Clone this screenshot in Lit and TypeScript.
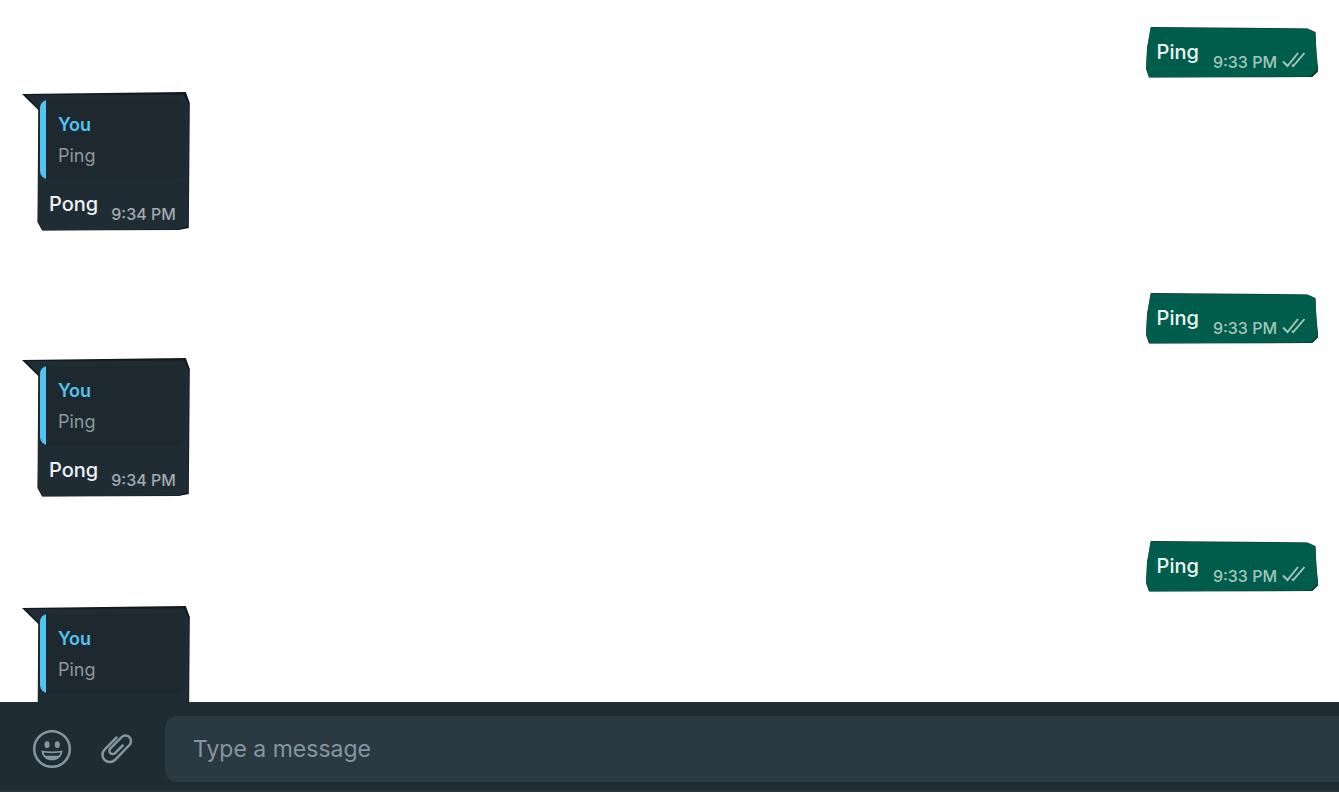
import { LitElement, html, css, svg } from "lit";
import { customElement, property, state } from "lit/decorators.js";

const doubleCheck = svg`
  <path d="M1 10.5L5.5 15L16 2" />
  <path d="M10 13.8L11.2 15L22.5 2" />`;

@customElement("sent-message")
class SentMessage extends LitElement {
  @property() text = "";
  @property() time = "";

  static styles = css`
    :host {
      display: block;
      position: relative;
      align-self: flex-end;
    }
    .shape {
      position: absolute;
      inset: 0;
      width: 100%;
      height: 100%;
    }
    .body {
      position: relative;
      display: flex;
      align-items: flex-start;
      height: 51px;
      padding: 0 12px 0 11px;
      box-sizing: border-box;
    }
    .text {
      margin: 0 14px 0 0;
      font-size: 20px;
      font-weight: 500;
      line-height: 50px;
      color: #eef7f4;
    }
    .time {
      font-size: 16px;
      font-weight: 500;
      line-height: 70px;
      color: #a3c7bc;
    }
    .check {
      width: 24px;
      height: 17px;
      margin: 24px 0 0 5px;
      fill: none;
      stroke: #a3c7bc;
      stroke-width: 1.9;
    }
  `;

  render() {
    return html`
      <svg class="shape" viewBox="0 0 172 51" preserveAspectRatio="none" aria-hidden="true">
        <path fill="#10332b" d="M5 0L161 1.4L169 5L170 25L172 44L166 50L3 50.6L0 42L1 21Z" />
        <path fill="#005c4b" d="M4.5 .7L161 1.8L169 5.6L170 25L171 43L164 49.6L3.2 50.3L.2 42L1.2 21Z" />
      </svg>
      <div class="body">
        <p class="text">${this.text}</p>
        <time class="time">${this.time}</time>
        <svg class="check" viewBox="0 0 24 17" role="img" aria-label="Delivered">${doubleCheck}</svg>
      </div>
    `;
  }
}

@customElement("reply-message")
class ReplyMessage extends LitElement {
  @property() author = "";
  @property() quote = "";
  @property() text = "";
  @property() time = "";

  static styles = css`
    :host {
      display: block;
      position: relative;
      align-self: flex-start;
    }
    .shape {
      position: absolute;
      inset: 0;
      width: 100%;
      height: 100%;
    }
    .body {
      position: relative;
      padding: 8px 5px 0 18px;
    }
    .quote {
      position: relative;
      height: 79px;
      margin: 0;
      padding: 9px 0 0 18px;
      box-sizing: border-box;
      border-radius: 8px;
      background: #1d282f;
      overflow: hidden;
    }
    .bar {
      position: absolute;
      left: 0;
      top: 0;
      width: 6px;
      height: 100%;
      background: #53c3f3;
    }
    .author,
    .quoted {
      display: block;
      font-size: 18px;
      line-height: 31px;
    }
    .author {
      font-weight: 600;
      color: #53c3f3;
    }
    .quoted {
      color: #8d979c;
    }
    .line {
      display: flex;
      height: 52px;
      padding: 0 8px 0 9px;
    }
    .text {
      margin: 0 13px 0 0;
      font-size: 20px;
      font-weight: 500;
      line-height: 50px;
      color: #eef2f4;
    }
    .time {
      margin-right: 1px;
      font-size: 16px;
      font-weight: 500;
      line-height: 70px;
      color: #a3abaf;
    }
  `;

  render() {
    return html`
      <svg class="shape" viewBox="0 0 167 139" preserveAspectRatio="none" aria-hidden="true">
        <path fill="#10191e" d="M0 2L163 0L167 11L166 136L156 138L20 138.6L15.4 130L16.2 18Z" />
        <path fill="#202c33" d="M4 3L161 2.5L166 13L165.5 134L155 137.6L20.4 138.2L15.8 130L16.6 17Z" />
      </svg>
      <div class="body">
        <blockquote class="quote">
          <span class="bar"></span>
          <span class="author">${this.author}</span>
          <span class="quoted">${this.quote}</span>
        </blockquote>
        <div class="line">
          <p class="text">${this.text}</p>
          <time class="time">${this.time}</time>
        </div>
      </div>
    `;
  }
}

@customElement("app-root")
class AppRoot extends LitElement {
  @state() private exchanges = [{ id: 1 }, { id: 2 }, { id: 3 }];

  static styles = css`
    :host {
      display: flex;
      flex-direction: column;
      height: 100vh;
      overflow: hidden;
      background: #fff;
      font-family: Inter, "Liberation Sans", sans-serif;
    }
    .thread {
      flex: 1;
      min-height: 0;
      overflow: hidden;
      padding: 27px 21px 0 22px;
    }
    .exchange {
      display: flex;
      flex-direction: column;
      gap: 14px;
      margin-bottom: 62px;
    }
    .exchange:nth-child(2) {
      margin-bottom: 44px;
    }
    .composer {
      flex: none;
      display: flex;
      align-items: center;
      height: 90px;
      padding: 5px 0 0 32px;
      box-sizing: border-box;
      background: #202c33;
      border-bottom: 1px solid #2a3942;
    }
    .tool {
      display: flex;
      padding: 0;
      border: 0;
      background: none;
      color: #8696a0;
    }
    .emoji {
      margin-right: 28px;
    }
    .attach {
      margin-right: 31px;
    }
    .field {
      flex: 1;
      min-width: 0;
      height: 66px;
      padding: 0 28px;
      box-sizing: border-box;
      border: 0;
      border-radius: 12px 0 0 12px;
      outline: 0;
      background: #2a3942;
      color: #d1d7db;
      font: 400 23px Inter, "Liberation Sans", sans-serif;
    }
    .field::placeholder {
      color: #8696a0;
      opacity: 1;
    }
  `;

  render() {
    return html`
      <main class="thread">
        ${this.exchanges.map(
          () => html`
            <section class="exchange">
              <sent-message text="Ping" time="9:33 PM"></sent-message>
              <reply-message author="You" quote="Ping" text="Pong" time="9:34 PM"></reply-message>
            </section>
          `
        )}
      </main>
      <form class="composer" @submit=${(e: Event) => e.preventDefault()}>
        <button class="tool emoji" type="button" aria-label="Emoji">
          <svg width="40" height="40" viewBox="0 0 40 40" aria-hidden="true">
            <circle cx="20" cy="20" r="17.8" fill="none" stroke="currentColor" stroke-width="2.5" />
            <ellipse cx="15" cy="15.7" rx="2.5" ry="3.4" fill="currentColor" />
            <ellipse cx="25.3" cy="15.7" rx="2.5" ry="3.4" fill="currentColor" />
            <path fill="currentColor" fill-rule="evenodd" d="M9.4 21.5Q20 23.4 30.6 21.5C30.2 28 25.5 31.3 20 31.3S9.8 28 9.4 21.5ZM11.8 23.6Q12.2 25.4 13.2 26.8H26.8Q27.9 25.4 28.2 23.6Q20 25 11.8 23.6Z" />
          </svg>
        </button>
        <button class="tool attach" type="button" aria-label="Attach">
          <svg width="34" height="34" viewBox="0 0 34 34" aria-hidden="true">
            <path fill="none" stroke="currentColor" stroke-width="2.5" stroke-linecap="round" d="M16.5 5.5L4.6 17.6A7.3 7.3 0 0 0 14.9 28L29.4 13A5.5 5.5 0 0 0 21.6 5.2L10.4 16.4A3.3 3.3 0 0 0 15.1 21.1L22.7 13.5" />
          </svg>
        </button>
        <input class="field" type="text" placeholder="Type a message" aria-label="Type a message" />
      </form>
    `;
  }
}
